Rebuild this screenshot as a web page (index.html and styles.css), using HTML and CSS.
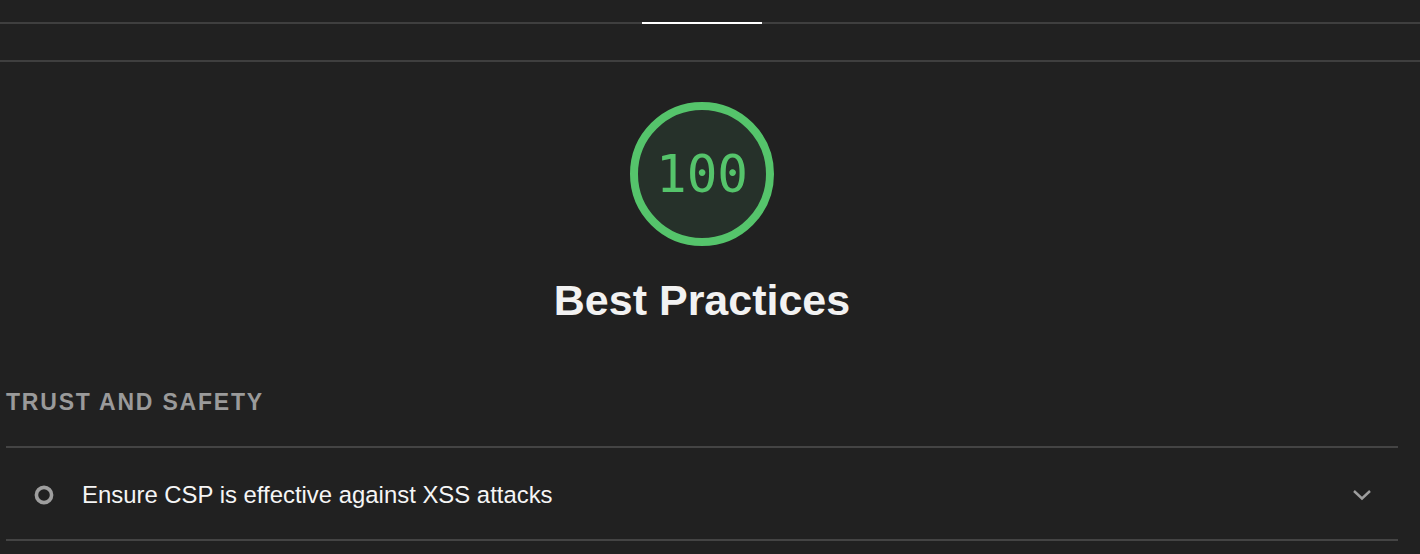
FILE: index.html
```html
<!DOCTYPE html>
<html>
<head>
<meta charset="utf-8">
<link rel="stylesheet" href="styles.css">
</head>
<body>
<div class="page">
  <div class="tabbar"><div class="tab"></div></div>
  <div class="subbar"></div>
  <div class="content">
    <div class="summary">
      <div class="gauge">
        <svg width="144" height="144" viewBox="0 0 144 144">
          <circle cx="72" cy="72" r="68" fill="#26312a" stroke="#55c46b" stroke-width="8"/>
        </svg>
        <span class="score">100</span>
      </div>
      <h1 class="title">Best Practices</h1>
    </div>
    <div class="group">
      <h2 class="group-title">TRUST AND SAFETY</h2>
      <div class="audit">
        <svg class="audit-icon" width="20" height="20" viewBox="0 0 20 20">
          <circle cx="10" cy="10" r="7.6" fill="none" stroke="#9e9e9e" stroke-width="3.6"/>
        </svg>
        <span class="audit-title">Ensure CSP is effective against XSS attacks</span>
        <svg class="chevron" width="20" height="12" viewBox="0 0 20 12">
          <path d="M2 2 L10 9.5 L18 2" fill="none" stroke="#9e9e9e" stroke-width="2.4"/>
        </svg>
      </div>
    </div>
  </div>
</div>
</body>
</html>
```
FILE: styles.css
```css
html, body {
  margin: 0;
  padding: 0;
  background: #212121;
}
body {
  font-family: "Liberation Sans", Arial, sans-serif;
  color: #f2f2f2;
  width: 1420px;
  height: 554px;
  overflow: hidden;
}
.page {
  width: 1420px;
}
.tabbar {
  height: 22px;
  border-bottom: 2px solid #3f3f3f;
  display: flex;
  width: 1420px;
}
.tab {
  margin-left: 642px;
  width: 120px;
  height: 22px;
  border-bottom: 2px solid #ffffff;
}
.subbar {
  height: 36px;
  border-bottom: 2px solid #3f3f3f;
}
.content {
  width: 1404px;
}
.summary {
  display: flex;
  flex-direction: column;
  align-items: center;
  padding-top: 40px;
}
.gauge {
  width: 144px;
  height: 144px;
  position: relative;
}
.gauge svg {
  display: block;
}
.score {
  position: absolute;
  left: 0;
  top: 0;
  width: 144px;
  height: 144px;
  display: flex;
  align-items: center;
  justify-content: center;
  font-family: "DejaVu Sans Mono", monospace;
  font-size: 51px;
  color: #55c46b;
}
.title {
  margin: 33px 0 0;
  font-size: 43px;
  line-height: 43px;
  font-weight: bold;
  color: #f2f2f2;
}
.group {
  padding: 0 6px;
  margin-top: 69px;
}
.group-title {
  margin: 0;
  font-size: 23px;
  line-height: 23px;
  font-weight: bold;
  letter-spacing: 1.8px;
  color: #9a9a9a;
  padding-bottom: 32px;
  border-bottom: 2px solid #444444;
}
.audit {
  display: flex;
  align-items: center;
  height: 93px;
  padding: 2px 26px 0 28px;
  box-sizing: border-box;
  border-bottom: 2px solid #444444;
}
.audit-icon {
  flex: none;
  margin-right: 28px;
}
.audit-title {
  flex: 1;
  font-size: 23.9px;
  color: #f5f5f5;
}
.chevron {
  flex: none;
}
```
